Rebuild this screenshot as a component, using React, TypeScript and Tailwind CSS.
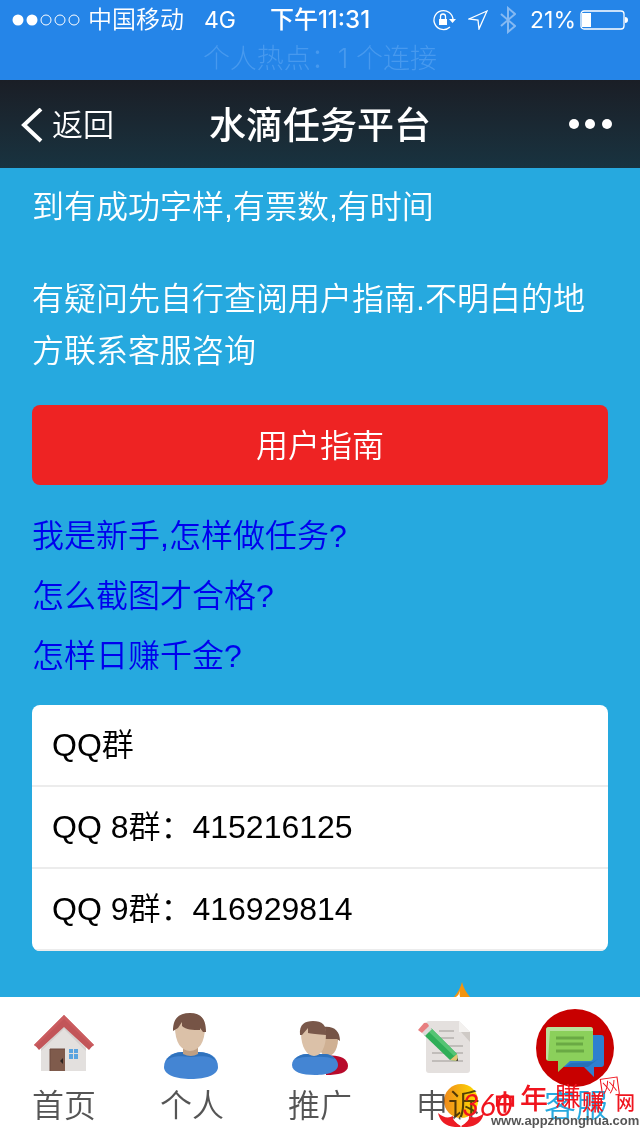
import React from 'react'

type Tab = {
    label: string
    icon: React.ReactNode
    active?: boolean
}

const HouseIcon = () => (
    <svg viewBox="0 0 80 80" className="w-20 h-20" aria-hidden="true">
        <path d="M40 16 L17 38 V63 H62 V38 Z" fill="#e3e0de" />
        <path d="M40 18 L17 41 V43 L40 21 L62 43 V41 Z" fill="#d5d0ce" />
        <path
            d="M40 7 L70 37 Q67 39 65 42 L40 19 L15 42 Q13 39 10 37 Z"
            fill="#c25559"
        />
        <path d="M40 7 L70 37 L68 38 L40 11 L12 38 L10 37 Z" fill="#cb5c5f" />
        <rect x="26" y="41" width="15" height="22" fill="#7f5b4c" />
        <path d="M26 63 V41 H41" fill="none" stroke="#6c4b3e" />
        <path d="M36 53 L39 50 V56 Z" fill="#2d2521" />
        <path
            d="M45 41h4v4h-4z M50 41h4v4h-4z M45 46h4v5h-4z M50 46h4v5h-4z"
            fill="#5ba4df"
        />
    </svg>
)

const PersonIcon = () => (
    <svg viewBox="0 0 80 80" className="w-20 h-20" aria-hidden="true">
        <path
            d="M31 44 H46 C58 44 66 49 66 59 C66 67 54 71 39 71 C24 71 12 67 12 59 C12 50 20 44 31 44 Z"
            fill="#4485d3"
        />
        <path
            d="M31 44 H46 C54 44 61 47 64 53 C57 47 50 48 39 49 C28 48 21 47 14 53 C17 47 24 44 31 44 Z"
            fill="#2f72bd"
        />
        <path d="M31 38 H46 V46 Q39 50 31 46 Z" fill="#bf9f83" />
        <path
            d="M23 19 C23 9 30 6 38 6 C47 6 53 9 53 19 C53 34 47 43 38 43 C29 43 23 34 23 19 Z"
            fill="#dbc1a8"
        />
        <path
            d="M21 23 C21 10 27 5 38 5 C49 5 54 11 54 24 L51 24 L48 20 V22 C41 22 34 22 30 18 V14 L26 20 Z"
            fill="#765446"
        />
    </svg>
)

const PeopleIcon = () => (
    <svg viewBox="0 0 80 80" className="w-20 h-20" aria-hidden="true">
        <path
            d="M46 48 C56 46 68 49 68 58 C68 65 58 67 46 67 Z"
            fill="#b80a2b"
        />
        <path
            d="M42 26 H58 C59 40 54 48 48 48 C42 48 40 44 40 38 Z"
            fill="#cfb093"
        />
        <path d="M44 19 C54 18 60 23 60 33 L57 31 L44 31 Z" fill="#765446" />
        <path
            d="M27 46 H44 C53 46 58 52 58 57 C58 64 47 67 35 67 C22 67 12 64 12 57 C12 50 20 46 27 46 Z"
            fill="#4485d3"
        />
        <path
            d="M27 46 H44 C49 46 53 48 55 51 Q45 48 35 49 Q25 48 15 51 Q20 46 27 46 Z"
            fill="#2f72bd"
        />
        <path
            d="M21 25 C21 17 27 14 34 14 C42 14 46 18 46 26 C46 39 41 48 34 48 C27 48 21 39 21 25 Z"
            fill="#dbc1a8"
        />
        <path
            d="M20 27 C19 16 25 13 33 13 C42 13 47 17 46 27 C38 26 31 26 28 25 V20 L22 27 Z"
            fill="#7a584a"
        />
    </svg>
)

const NoteIcon = () => (
    <svg viewBox="0 0 80 80" className="w-20 h-20" aria-hidden="true">
        <path
            d="M21 13 H51 L62 24 V62 Q62 65 59 65 H21 Q18 65 18 62 V16 Q18 13 21 13 Z"
            fill="#e4e0de"
        />
        <path d="M51 13 V24 H62 Z" fill="#f3f1ef" />
        <path d="M53 24 H62 V34 Z" fill="#cfcac6" />
        <path
            d="M31 23 H46 M31 30 H46 M38 38 H55 M24 45 H55 M24 53 H55"
            stroke="#c1bdba"
            strokeWidth="2"
        />
        <path d="M16 27 L23 20 L49 46 L50 53 L42 52 Z" fill="#2fae58" />
        <path d="M20 23 L23 20 L49 46 L46 48 Z" fill="#55c474" />
        <path d="M42 52 L49 46 L50 53 Z" fill="#e5c474" />
        <path d="M48 53 L50 50 V53 Z" fill="#4d493c" />
        <path d="M14 25 L21 18 L24 21 L17 28 Z" fill="#dcdad9" />
        <path
            d="M10 22 L16 15 Q18 14 20 16 L21 18 L14 25 L10 22 Z"
            fill="#e87f80"
        />
    </svg>
)

const ChatIcon = () => (
    <svg viewBox="0 0 80 80" className="w-20 h-20" aria-hidden="true">
        <circle cx="39" cy="40" r="39" fill="#c80000" />
        <path
            d="M35 27 H65 Q68 27 68 30 V56 Q68 59 65 59 H58 V69 L48 59 H28 Z"
            fill="#2e80d0"
        />
        <path d="M57 54 L35 55 L29 59 H52 L62 51 Z" fill="#2670b8" />
        <path
            d="M13 19 H54 Q57 19 57 22 V50 Q57 53 54 53 H34 L22 64 V53 H13 Q10 53 10 50 V22 Q10 19 13 19 Z"
            fill="#8bd05b"
        />
        <path
            d="M10 22 Q10 19 13 19 H54 Q57 19 57 22 V23 H14 L12 52 Q10 52 10 50 Z"
            fill="#b9e19b"
        />
        <path
            d="M20 30 H48 M20 36 H47 M20 43 H48"
            stroke="#6aa944"
            strokeWidth="3"
        />
    </svg>
)

const tabs: Tab[] = [
    { label: '首页', icon: <HouseIcon /> },
    { label: '个人', icon: <PersonIcon /> },
    { label: '推广', icon: <PeopleIcon /> },
    { label: '申诉', icon: <NoteIcon /> },
    { label: '客服', icon: <ChatIcon />, active: true },
]

const guideLinks = ['我是新手,怎样做任务?', '怎么截图才合格?', '怎样日赚千金?']

const groups = ['QQ群', 'QQ 8群：415216125', 'QQ 9群：416929814']

const StatusBar = () => (
    <div className="bg-[#2585e8] h-20 text-white font-['Inter','Noto_Sans_CJK_SC',sans-serif] text-2xl">
        <div className="grid grid-cols-[1fr_auto_1fr] items-center h-10 px-3">
            <div className="flex items-center">
                <svg
                    viewBox="0 0 70 14"
                    className="w-[70px] h-3.5 mr-1.5"
                    aria-hidden="true"
                >
                    <g fill="#fff">
                        <circle cx="6" cy="7" r="5.5" />
                        <circle cx="20" cy="7" r="5.5" />
                    </g>
                    <g fill="none" stroke="#fff">
                        <circle cx="34" cy="7" r="5" />
                        <circle cx="48" cy="7" r="5" />
                        <circle cx="62" cy="7" r="5" />
                    </g>
                </svg>
                <span className="font-[350]">中国移动</span>
                <span className="ml-5 text-[23px]">4G</span>
            </div>
            <span className="font-medium">下午11:31</span>
            <div className="flex items-center justify-end">
                {/* Rotation lock */}
                <svg
                    viewBox="0 0 24 24"
                    className="w-6 h-6 mr-3"
                    aria-hidden="true"
                >
                    <path
                        d="M18 19 A9.5 9.5 0 1 1 21 12"
                        fill="none"
                        stroke="#fff"
                        strokeWidth="1.3"
                    />
                    <path d="M17 11 H24 L20.5 15 Z" fill="#fff" />
                    <rect x="7" y="11" width="8" height="6" fill="#fff" />
                    <path
                        d="M8.5 11 V8.5 a2.5 2.5 0 0 1 5 0 V11"
                        fill="none"
                        stroke="#fff"
                        strokeWidth="1.3"
                    />
                </svg>
                <svg
                    viewBox="0 0 20 20"
                    className="w-5 h-5 mr-3"
                    aria-hidden="true"
                >
                    <path
                        d="M19 1 L1 9 L10 10 L11 19 Z"
                        fill="none"
                        stroke="#fff"
                        strokeWidth="1.3"
                    />
                </svg>
                <svg
                    viewBox="0 0 16 28"
                    className="w-4 h-7 mr-3.5"
                    aria-hidden="true"
                >
                    <path
                        d="M1 8 L15 20 L8 26 V2 L15 8 L1 20"
                        fill="none"
                        stroke="#85b9f2"
                        strokeWidth="2"
                    />
                </svg>
                <span className="text-[23px]">21%</span>
                <svg
                    viewBox="0 0 48 20"
                    className="w-12 h-5 ml-1"
                    aria-hidden="true"
                >
                    <rect
                        x="1"
                        y="1"
                        width="43"
                        height="18"
                        rx="3"
                        fill="none"
                        stroke="#fff"
                        strokeWidth="1.3"
                    />
                    <rect x="2" y="3" width="9" height="14" fill="#fff" />
                    <path d="M45 7 Q48 7 48 10 Q48 13 45 13 Z" fill="#fff" />
                </svg>
            </div>
        </div>
        <p className="text-center text-[27px] leading-[38px] font-light text-[#4799ee]">
            个人热点：1 个连接
        </p>
    </div>
)

const NavBar = () => (
    <header className="grid grid-cols-[1fr_auto_1fr] items-center h-22 px-5 bg-linear-to-b from-[#1a1e26] to-[#183340] text-white">
        <button
            type="button"
            className="flex items-center pt-1 text-[31px] font-[350]"
        >
            <svg
                viewBox="0 0 24 36"
                className="w-6 h-9 mr-2"
                aria-hidden="true"
            >
                <path
                    d="M21 1 L4 17 L21 33"
                    fill="none"
                    stroke="#fff"
                    strokeWidth="4"
                />
            </svg>
            返回
        </button>
        <h1 className="pt-1 text-[37px] font-medium leading-none">
            水滴任务平台
        </h1>
        <button type="button" aria-label="更多" className="justify-self-end pr-2">
            <svg viewBox="0 0 44 12" className="w-11 h-3" fill="#fff">
                <circle cx="6" cy="6" r="5" />
                <circle cx="22" cy="6" r="5" />
                <circle cx="39" cy="6" r="5" />
            </svg>
        </button>
    </header>
)

const Watermark = () => (
    <svg
        viewBox="0 0 208 64"
        className="absolute right-0 bottom-0 w-52 h-16 pointer-events-none"
        aria-hidden="true"
    >
        <defs>
            <linearGradient id="coin" x1="0" x2="1">
                <stop offset="0" stopColor="#f08a1c" />
                <stop offset="1" stopColor="#fde000" />
            </linearGradient>
        </defs>
        <circle
            cx="29"
            cy="29"
            r="17"
            fill="url(#coin)"
            className="mix-blend-multiply"
        />
        <path
            d="M6 41 Q14 48 21 44 Q20 49 29 54 Q38 49 37 44 Q44 48 52 41 Q49 54 35 55 H23 Q9 54 6 41 Z"
            fill="#ed1c24"
        />
        <path d="M29 45 V56" stroke="#fff" />
        <g fill="#f0141e" className="font-['Lato','Noto_Sans_CJK_SC',sans-serif]">
            <text x="30" y="44" fontSize="30" fontStyle="italic">
                360
            </text>
            <text x="62" y="38" fontSize="22" fontWeight="700">
                中
            </text>
            <text x="88" y="37" fontSize="28" fontWeight="500">
                年
            </text>
            <text x="123" y="34" fontSize="26">
                賺
            </text>
            <text x="150" y="38" fontSize="22" fontWeight="500">
                赚
            </text>
            <text
                x="168"
                y="24"
                fontSize="22"
                fontWeight="300"
                transform="rotate(-8 168 24)"
            >
                网
            </text>
            <text x="184" y="38" fontSize="19" fontWeight="500">
                网
            </text>
        </g>
        <text
            x="59"
            y="53"
            fontSize="13"
            fontWeight="700"
            fill="#555"
            className="font-['Liberation_Sans',sans-serif]"
        >
            www.appzhonghua.com
        </text>
    </svg>
)

const TabBar = () => (
    <nav className="relative grid grid-cols-5 bg-white pt-[11px] pb-3">
        {/* Flame peeking out above the bar */}
        <svg
            viewBox="0 0 16 16"
            className="absolute left-[71%] -top-4 w-4 h-4"
            aria-hidden="true"
        >
            <path d="M8 1 Q10 9 16 16 H0 Q6 9 8 1 Z" fill="#f3940f" />
            <path d="M6 10 Q5 13 6 16 H2 Q5 14 6 10 Z" fill="#fff" />
        </svg>
        {tabs.map((tab) => (
            <a
                key={tab.label}
                href="#"
                className={`flex flex-col items-center text-[32px] leading-9 font-[350] ${
                    tab.active ? 'text-[#26a9df]' : 'text-[#555]'
                }`}
            >
                {tab.icon}
                <span>{tab.label}</span>
            </a>
        ))}
        <Watermark />
    </nav>
)

export default function App() {
    return (
        <div className="flex flex-col min-h-screen bg-[#26a9df] font-['Liberation_Sans','Noto_Sans_CJK_SC',sans-serif]">
            <StatusBar />
            <NavBar />
            <main className="flex-1 px-8 pt-[13px] pb-11 text-[32px]">
                <div className="flex flex-col gap-10 text-white font-[350] leading-[52px]">
                    <p>到有成功字样,有票数,有时间</p>
                    <p>有疑问先自行查阅用户指南.不明白的地方联系客服咨询</p>
                </div>
                <button
                    type="button"
                    className="w-full h-20 mt-7 pt-0.5 rounded-lg bg-[#ee2323] text-white font-[350]"
                >
                    用户指南
                </button>
                <ul className="mt-[21px] leading-[60px] font-[350] text-[#0000ee]">
                    {guideLinks.map((text) => (
                        <li key={text}>
                            <a href="#">{text}</a>
                        </li>
                    ))}
                </ul>
                <ul className="mt-[19px] rounded-lg overflow-hidden bg-white text-black leading-[80px]">
                    {groups.map((group) => (
                        <li
                            key={group}
                            className="px-5 border-b-2 border-[#ececec] font-[350]"
                        >
                            {group}
                        </li>
                    ))}
                </ul>
            </main>
            <TabBar />
        </div>
    )
}
